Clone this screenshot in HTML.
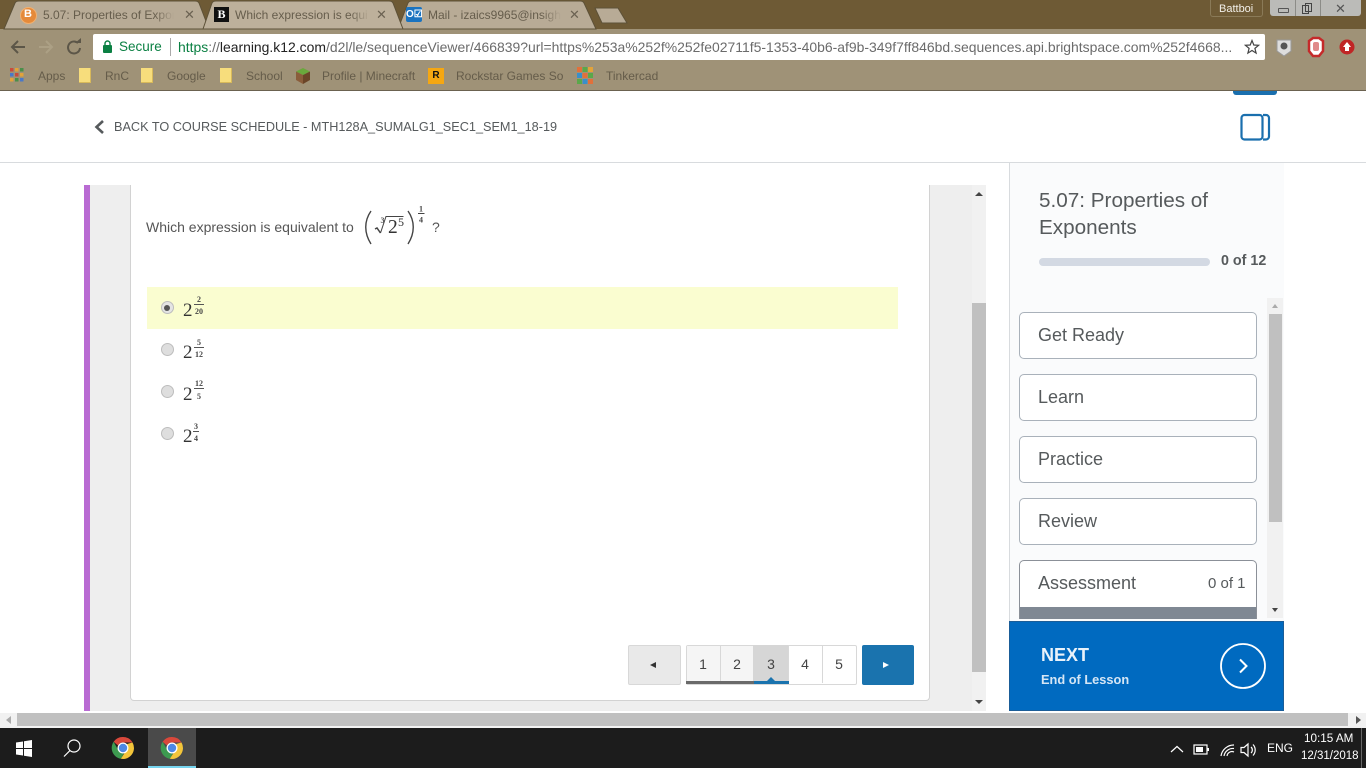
<!DOCTYPE html>
<html><head><meta charset="utf-8"><title>5.07: Properties of Exponents</title>
<style>
html,body{margin:0;padding:0;width:1366px;height:768px;overflow:hidden;background:#fff;font-family:"Liberation Sans",sans-serif}
.a{position:absolute}
.t{position:absolute;white-space:nowrap}
.tab{position:absolute;top:8px;font-size:12px;color:#665d4c;white-space:nowrap;overflow:hidden;line-height:15px;-webkit-mask-image:linear-gradient(90deg,#000 85%,transparent);mask-image:linear-gradient(90deg,#000 85%,transparent)}
.x{position:absolute;top:7px;font-size:13px;color:#6b6252;line-height:15px}
.bm{position:absolute;top:69px;font-size:12px;color:#655c4a;white-space:nowrap;line-height:14px}
.fold{position:absolute;top:68px;width:11px;height:14px;background:#f7dd7c;border-right:1px solid #d8b95a;border-bottom:1px solid #d8b95a}
.item{position:absolute;left:1019px;width:236px;height:45px;background:#fff;border:1px solid #a9b1ba;border-radius:5px}
.item span{position:absolute;left:18px;top:11px;font-size:18px;color:#565a5c;line-height:22px}
.pg{position:absolute;top:645px;height:38px;text-align:center;line-height:38px;font-size:14px;color:#444}
.radio{position:absolute;left:161px;width:11px;height:11px;border-radius:50%;border:1px solid #bdbdbd;background:#dedede}
.m{position:absolute;font-family:"Liberation Serif",serif;color:#333;line-height:1;font-size:19px}
.fn{position:absolute;font-family:"Liberation Serif",serif;font-weight:bold;font-size:8px;color:#444;text-align:center;line-height:8px;width:14px}
.bar{position:absolute;height:1px;background:#555}
</style></head><body>

<!-- chrome frame -->
<div class="a" style="left:0;top:0;width:1366px;height:29px;background:#6e5a35"></div>
<div class="a" style="left:0;top:29px;width:1366px;height:62px;background:#9f9277"></div>
<div class="a" style="left:0;top:90px;width:1366px;height:1px;background:#6b6250"></div>

<svg class="a" style="left:0;top:0" width="640" height="30">
<path d="M4 29 L15 3 Q16 1 19 1 H195 Q198 1 199 3 L209 29 Z" fill="#b8ab96" stroke="#5d5138"/>
<path d="M398 29 L408 3 Q409 1 412 1 H580 Q583 1 584 3 L596 29 Z" fill="#b8ab96" stroke="#5d5138"/>
<path d="M203 29 L212 3 Q213 1 216 1 H389 Q392 1 393 3 L403 29 Z" fill="#bdb09b" stroke="#5d5138"/>
<path d="M595 8 H618 L627 23 H602 Z" fill="#b8ab96" stroke="#5d5138"/>
</svg>
<div class="a" style="left:20px;top:7px;width:15px;height:15px;border-radius:50%;background:#e58a3a;border:1px solid #f0b070"></div>
<div class="t" style="left:24px;top:8px;font-size:11px;font-weight:bold;color:#fff;line-height:13px">B</div>
<div class="tab" style="left:43px;width:131px">5.07: Properties of Expon</div>
<div class="x" style="left:184px">✕</div>
<div class="a" style="left:214px;top:7px;width:15px;height:15px;background:#111;color:#fff;font:bold 12px/15px 'Liberation Serif',serif;text-align:center">B</div>
<div class="tab" style="left:235px;width:135px">Which expression is equi</div>
<div class="x" style="left:376px">✕</div>
<div class="a" style="left:406px;top:7px;width:16px;height:15px;background:#1a73c0;border-radius:2px;color:#fff;font:bold 10px/15px 'Liberation Sans',sans-serif;text-align:center;overflow:hidden">O☑</div>
<div class="tab" style="left:428px;width:133px">Mail - izaics9965@insight</div>
<div class="x" style="left:569px">✕</div>

<!-- window buttons -->
<div class="a" style="left:1210px;top:0;width:51px;height:16px;border:1px solid #8a7a58;border-top:0;border-radius:0 0 3px 3px;background:#6e5a35"></div>
<div class="t" style="left:1219px;top:2px;font-size:11px;color:#f2efe8;line-height:14px">Battboi</div>
<div class="a" style="left:1270px;top:0;width:91px;height:16px;background:#bbbbb8;border-radius:0 0 3px 3px"></div>
<div class="a" style="left:1278px;top:8px;width:9px;height:3px;border:1px solid #555;border-radius:1px"></div>
<div class="a" style="left:1295px;top:0;width:1px;height:16px;background:#8c8c88"></div>
<div class="a" style="left:1320px;top:0;width:1px;height:16px;background:#8c8c88"></div>
<div class="a" style="left:1302px;top:5px;width:5px;height:7px;border:1px solid #444;background:#bbbbb8"></div>
<div class="a" style="left:1305px;top:3px;width:5px;height:7px;border:1px solid #444"></div>
<div class="t" style="left:1335px;top:1px;font-size:13px;color:#555;line-height:15px">✕</div>

<!-- toolbar -->
<svg class="a" style="left:0;top:34px" width="92" height="26" fill="none" stroke-width="2">
<path d="M25 13 H12 M18 7 L12 13 L18 19" stroke="#5c5648"/>
<path d="M39 13 H52 M46 7 L52 13 L46 19" stroke="#aca085"/>
<path d="M78 9 A6 6 0 1 0 80 14" stroke="#5c5648"/>
<path d="M75 9 H81 V4 Z" fill="#5c5648" stroke="none"/>
</svg>
<div class="a" style="left:93px;top:34px;width:1172px;height:26px;background:#fff;border-radius:2px"></div>
<svg class="a" style="left:102px;top:40px" width="12" height="14"><rect x="1" y="5" width="9" height="8" rx="1" fill="#0b8043"/><path d="M3 5 V3.500 a2.500 2.500 0 0 1 5 0 V5" fill="none" stroke="#0b8043" stroke-width="1.400"/></svg>
<div class="t" style="left:119px;top:39px;font-size:13.500px;color:#0b8043;line-height:16px">Secure</div>
<div class="a" style="left:170px;top:38px;width:1px;height:18px;background:#aaa"></div>
<div class="t" style="left:178px;top:39px;width:1056px;overflow:hidden;font-size:13.950px;color:#6b6b6b;line-height:16px"><span style="color:#0b8043">https</span>://<span style="color:#222">learning.k12.com</span>/d2l/le/sequenceViewer/466839?url=https%253a%252f%252fe02711f5-1353-40b6-af9b-349f7ff846bd.sequences.api.brightspace.com%252f4668...</div>
<svg class="a" style="left:1244px;top:39px" width="16" height="16"><path d="M8 1.500 L9.800 6 L14.600 6.300 L10.900 9.400 L12.100 14.100 L8 11.500 L3.900 14.100 L5.100 9.400 L1.400 6.300 L6.200 6 Z" fill="none" stroke="#444" stroke-width="1.200"/></svg>
<svg class="a" style="left:1272px;top:36px" width="90" height="22">
<path d="M5 4 H19 V15 L12 20 L5 15 Z" fill="#ddd" stroke="#999"/><circle cx="12" cy="10" r="3.500" fill="#555"/>
<path d="M37 5 L41 2 H47 L51 5 V15 L47 20 H41 L37 15 Z" fill="#fff" stroke="#c52a2a" stroke-width="2.500"/><rect x="41" y="6" width="6" height="9" rx="2" fill="#e08a8a"/>
<circle cx="75" cy="11" r="7.500" fill="#c02525"/><path d="M75 6 L79 11 H77 V15 H73 V11 H71 Z" fill="#fff"/>
</svg>

<!-- bookmarks -->
<svg class="a" style="left:10px;top:68px" width="14" height="14">
<g fill="#c94c3c"><rect x="0" y="0" width="3.500" height="3.500"/><rect x="5" y="0" width="3.500" height="3.500" fill="#e2a33a"/><rect x="10" y="0" width="3.500" height="3.500" fill="#4a8f4a"/><rect x="0" y="5" width="3.500" height="3.500" fill="#4a78c9"/><rect x="5" y="5" width="3.500" height="3.500"/><rect x="10" y="5" width="3.500" height="3.500" fill="#e2a33a"/><rect x="0" y="10" width="3.500" height="3.500" fill="#e2a33a"/><rect x="5" y="10" width="3.500" height="3.500" fill="#4a8f4a"/><rect x="10" y="10" width="3.500" height="3.500" fill="#4a78c9"/></g></svg>
<div class="bm" style="left:38px">Apps</div>
<div class="fold" style="left:79px"></div><div class="bm" style="left:105px">RnC</div>
<div class="fold" style="left:141px"></div><div class="bm" style="left:167px">Google</div>
<div class="fold" style="left:220px"></div><div class="bm" style="left:246px">School</div>
<svg class="a" style="left:295px;top:68px" width="16" height="16"><path d="M8 0 L15 3.500 L8 7 L1 3.500 Z" fill="#6aa83c"/><path d="M1 3.500 L8 7 V16 L1 12 Z" fill="#8a5d3b"/><path d="M15 3.500 L8 7 V16 L15 12 Z" fill="#6b4528"/></svg>
<div class="bm" style="left:322px">Profile | Minecraft</div>
<div class="a" style="left:428px;top:68px;width:16px;height:16px;background:#f5a712;color:#111;font:bold 10px/15px 'Liberation Sans',sans-serif;text-align:center">R</div>
<div class="bm" style="left:456px;width:107px;overflow:hidden">Rockstar Games Soc</div>
<svg class="a" style="left:577px;top:67px" width="16" height="17"><g><rect width="5" height="5" fill="#e2703a"/><rect x="5.500" width="5" height="5" fill="#5aa84a"/><rect x="11" width="5" height="5" fill="#e2a33a"/><rect y="6" width="5" height="5" fill="#3a8fc9"/><rect x="5.500" y="6" width="5" height="5" fill="#e2703a"/><rect x="11" y="6" width="5" height="5" fill="#5aa84a"/><rect y="12" width="5" height="5" fill="#5aa84a"/><rect x="5.500" y="12" width="5" height="5" fill="#3a8fc9"/><rect x="11" y="12" width="5" height="5" fill="#e2703a"/></g></svg>
<div class="bm" style="left:606px">Tinkercad</div>

<!-- page header -->
<div class="a" style="left:1233px;top:91px;width:44px;height:4px;background:#1a6fae;border-radius:0 0 3px 3px"></div>
<svg class="a" style="left:93px;top:119px" width="12" height="16"><path d="M10 2 L3.500 8 L10 14" fill="none" stroke="#565a5c" stroke-width="2.600"/></svg>
<div class="t" style="left:114px;top:119px;font-size:12.700px;color:#565a5c;line-height:16px">BACK TO COURSE SCHEDULE - MTH128A_SUMALG1_SEC1_SEM1_18-19</div>
<svg class="a" style="left:1240px;top:113px" width="32" height="28" fill="none" stroke="#1a6fae" stroke-width="2.200"><rect x="1.500" y="2" width="21" height="24.500" rx="3"/><path d="M23 2 H26 a3 3 0 0 1 3 3 V23.500 a3 3 0 0 1 -3 3 H23"/></svg>
<div class="a" style="left:0;top:162px;width:1366px;height:1px;background:#d8dbde"></div>

<!-- content -->
<div class="a" style="left:84px;top:185px;width:6px;height:526px;background:#b96bd3"></div>
<div class="a" style="left:90px;top:185px;width:896px;height:526px;background:#eeeeee"></div>
<div class="a" style="left:130px;top:185px;width:798px;height:515px;background:#fff;border:1px solid #d2d2d2;border-top:0;border-radius:0 0 4px 4px"></div>

<div class="t" style="left:146px;top:219px;font-size:14px;color:#555;line-height:16px">Which expression is equivalent to</div>
<svg class="a" style="left:362px;top:203px" width="70" height="44">
<path d="M9 8 C2 18 2 30 9 41" fill="none" stroke="#444" stroke-width="1.400"/>
<path d="M46 8 C53 18 53 30 46 41" fill="none" stroke="#444" stroke-width="1.400"/>
<path d="M13 26 L15 25 L18.500 30" fill="none" stroke="#444" stroke-width="1.500"/>
<path d="M18.500 30 L24 13.500 H41.500" fill="none" stroke="#444" stroke-width="1"/>
<text x="18.500" y="20" font-family="Liberation Serif" font-size="8" font-weight="bold" fill="#555">3</text>
<text x="26" y="30" font-family="Liberation Serif" font-size="19.500" fill="#333">2</text>
<text x="36" y="23" font-family="Liberation Serif" font-size="12" fill="#333">5</text>
<text x="57" y="8.500" font-family="Liberation Serif" font-size="8" font-weight="bold" fill="#444">1</text>
<path d="M56 10.500 H62.500" stroke="#444" stroke-width="1"/>
<text x="57" y="19.500" font-family="Liberation Serif" font-size="8" font-weight="bold" fill="#444">4</text>
</svg>
<div class="t" style="left:432px;top:219px;font-size:14px;color:#555;line-height:16px">?</div>

<div class="a" style="left:147px;top:287px;width:751px;height:42px;background:#fafdd0"></div>

<div class="radio" style="top:301px;background:#e4e4e4"></div>
<div class="a" style="left:164px;top:305px;width:6px;height:6px;border-radius:50%;background:#555"></div>
<div class="radio" style="top:343px"></div>
<div class="radio" style="top:385px"></div>
<div class="radio" style="top:427px"></div>

<div class="m" style="left:183px;top:301px">2</div>
<div class="fn" style="left:192px;top:296px">2</div><div class="bar" style="left:194px;top:304px;width:10px"></div><div class="fn" style="left:192px;top:308px">20</div>
<div class="m" style="left:183px;top:343px">2</div>
<div class="fn" style="left:192px;top:339px">5</div><div class="bar" style="left:194px;top:347px;width:10px"></div><div class="fn" style="left:192px;top:351px">12</div>
<div class="m" style="left:183px;top:385px">2</div>
<div class="fn" style="left:192px;top:380px">12</div><div class="bar" style="left:194px;top:388px;width:10px"></div><div class="fn" style="left:192px;top:393px">5</div>
<div class="m" style="left:183px;top:427px">2</div>
<div class="fn" style="left:189px;top:423px">3</div><div class="bar" style="left:193px;top:431px;width:6px"></div><div class="fn" style="left:189px;top:435px">4</div>

<!-- pager -->
<div class="a" style="left:628px;top:645px;width:51px;height:38px;background:#e9e9e9;border:1px solid #d8d8d8;border-radius:2px"></div>
<div class="a" style="left:650px;top:662px;width:0;height:0;border-right:6px solid #333;border-top:3px solid transparent;border-bottom:3px solid transparent"></div>
<div class="a" style="left:686px;top:645px;width:169px;height:38px;border:1px solid #d8d8d8;border-radius:2px;background:#fff"></div>
<div class="a" style="left:687px;top:646px;width:66px;height:37px;background:#f5f5f5"></div>
<div class="a" style="left:753px;top:645px;width:36px;height:39px;background:#d6d6d6"></div>
<div class="a" style="left:720px;top:645px;width:1px;height:38px;background:#d8d8d8"></div>
<div class="a" style="left:822px;top:645px;width:1px;height:38px;background:#d8d8d8"></div>
<div class="a" style="left:788px;top:645px;width:1px;height:38px;background:#d8d8d8"></div>
<div class="pg" style="left:686px;width:34px">1</div>
<div class="pg" style="left:720px;width:34px">2</div>
<div class="pg" style="left:754px;width:34px">3</div>
<div class="pg" style="left:788px;width:34px">4</div>
<div class="pg" style="left:822px;width:34px">5</div>
<div class="a" style="left:686px;top:681px;width:68px;height:3px;background:#6a6a6a"></div>
<div class="a" style="left:754px;top:681px;width:35px;height:3px;background:#1a73ae"></div>
<div class="a" style="left:767px;top:677px;width:0;height:0;border-left:4px solid transparent;border-right:4px solid transparent;border-bottom:4px solid #1a73ae"></div>
<div class="a" style="left:862px;top:645px;width:52px;height:40px;background:#1a73ae;border-radius:2px"></div>
<div class="a" style="left:883px;top:662px;width:0;height:0;border-left:6px solid #fff;border-top:3px solid transparent;border-bottom:3px solid transparent"></div>

<!-- content scrollbar -->
<div class="a" style="left:972px;top:185px;width:14px;height:526px;background:#f1f1f1"></div>
<div class="a" style="left:972px;top:303px;width:14px;height:369px;background:#c0c0c0"></div>
<div class="a" style="left:975px;top:192px;width:0;height:0;border-left:4px solid transparent;border-right:4px solid transparent;border-bottom:4px solid #444"></div>
<div class="a" style="left:975px;top:700px;width:0;height:0;border-left:4px solid transparent;border-right:4px solid transparent;border-top:4px solid #444"></div>

<!-- sidebar -->
<div class="a" style="left:1009px;top:163px;width:275px;height:458px;background:#fafbfc;border-left:1px solid #d8dbde;box-sizing:border-box"></div>
<div class="a" style="left:1039px;top:187px;font-size:20.700px;line-height:27px;color:#565a5c;width:200px">5.07: Properties of Exponents</div>
<div class="a" style="left:1039px;top:258px;width:171px;height:8px;background:#d3d9e3;border-radius:4px"></div>
<div class="t" style="left:1221px;top:253px;font-size:14.300px;font-weight:bold;color:#565a5c;line-height:16px">0 of 12</div>

<div class="item" style="top:312px"><span>Get Ready</span></div>
<div class="item" style="top:374px"><span>Learn</span></div>
<div class="item" style="top:436px"><span>Practice</span></div>
<div class="item" style="top:498px"><span>Review</span></div>
<div class="item" style="top:560px;height:58px;overflow:hidden;border-color:#8b9098;border-bottom:0;border-radius:5px 5px 0 0"><span>Assessment</span><div class="t" style="left:188px;top:15px;font-size:15px;color:#565a5c;line-height:16px">0 of 1</div><div class="a" style="left:0;top:46px;width:236px;height:12px;background:#7f8893"></div></div>

<div class="a" style="left:1267px;top:298px;width:16px;height:320px;background:#f1f1f1"></div>
<div class="a" style="left:1269px;top:314px;width:13px;height:208px;background:#c0c0c0"></div>
<div class="a" style="left:1272px;top:304px;width:0;height:0;border-left:3.500px solid transparent;border-right:3.500px solid transparent;border-bottom:4px solid #aaa"></div>
<div class="a" style="left:1272px;top:608px;width:0;height:0;border-left:3.500px solid transparent;border-right:3.500px solid transparent;border-top:4px solid #444"></div>

<!-- next -->
<div class="a" style="left:1009px;top:621px;width:275px;height:90px;background:#006ac0;border:1px solid #1a5d98;box-sizing:border-box"></div>
<div class="t" style="left:1041px;top:645px;font-size:18px;font-weight:bold;color:#e9f2fa;line-height:21px">NEXT</div>
<div class="t" style="left:1041px;top:672px;font-size:12.800px;font-weight:bold;color:#d5e6f5;line-height:16px">End of Lesson</div>
<svg class="a" style="left:1218px;top:641px" width="50" height="50" fill="none" stroke="#fff" stroke-width="1.800"><circle cx="25" cy="25" r="22"/><path d="M22 18.500 L28.500 25 L22 31.500" stroke-width="2"/></svg>

<!-- bottom scrollbar -->
<div class="a" style="left:0;top:713px;width:1366px;height:15px;background:#f1f1f1"></div>
<div class="a" style="left:17px;top:713px;width:1331px;height:13px;background:#c0c0c0"></div>
<div class="a" style="left:6px;top:716px;width:0;height:0;border-right:5px solid #aaa;border-top:4px solid transparent;border-bottom:4px solid transparent"></div>
<div class="a" style="left:1356px;top:716px;width:0;height:0;border-left:5px solid #555;border-top:4px solid transparent;border-bottom:4px solid transparent"></div>

<!-- taskbar -->
<div class="a" style="left:0;top:728px;width:1366px;height:40px;background:#1c1c1c"></div>
<svg class="a" style="left:16px;top:740px" width="17" height="17" fill="#fff"><path d="M0 2.500 L7 1.500 V8 H0 Z M8 1.300 L16 0 V8 H8 Z M0 9 H7 V15.500 L0 14.500 Z M8 9 H16 V17 L8 15.700 Z"/></svg>
<svg class="a" style="left:62px;top:738px" width="20" height="20" fill="none" stroke="#fff" stroke-width="1.200"><circle cx="12" cy="8" r="6"/><path d="M8 12.500 L2 18.500"/></svg>
<div class="a" style="left:148px;top:728px;width:48px;height:40px;background:#4a4a4a"></div>
<div class="a" style="left:148px;top:766px;width:48px;height:2px;background:#76d5ef"></div>
<svg class="a" style="left:111px;top:736px" width="24" height="24" viewBox="0 0 24 24"><path d="M12 1 A11 11 0 0 1 21.500 6.500 H12 A5.500 5.500 0 0 0 7 9.500 L2.600 5.800 A11 11 0 0 1 12 1Z" fill="#d9483b"/><path d="M2.600 5.800 L7.500 14.500 A5.500 5.500 0 0 0 12.800 17.500 L9.800 22.800 A11 11 0 0 1 2.600 5.800Z" fill="#3d9a50"/><path d="M21.500 6.500 A11 11 0 0 1 9.800 22.800 L15.500 14 A5.500 5.500 0 0 0 16 8 Z" fill="#f3c53a"/><circle cx="12" cy="12" r="5.500" fill="#fff"/><circle cx="12" cy="12" r="4.200" fill="#4e88e5"/></svg>
<svg class="a" style="left:160px;top:736px" width="24" height="24" viewBox="0 0 24 24"><path d="M12 1 A11 11 0 0 1 21.500 6.500 H12 A5.500 5.500 0 0 0 7 9.500 L2.600 5.800 A11 11 0 0 1 12 1Z" fill="#d9483b"/><path d="M2.600 5.800 L7.500 14.500 A5.500 5.500 0 0 0 12.800 17.500 L9.800 22.800 A11 11 0 0 1 2.600 5.800Z" fill="#3d9a50"/><path d="M21.500 6.500 A11 11 0 0 1 9.800 22.800 L15.500 14 A5.500 5.500 0 0 0 16 8 Z" fill="#f3c53a"/><circle cx="12" cy="12" r="5.500" fill="#fff"/><circle cx="12" cy="12" r="4.200" fill="#4e88e5"/></svg>

<svg class="a" style="left:1168px;top:738px" width="90" height="22" fill="none" stroke="#fff" stroke-width="1.200">
<path d="M3 14 L9 8.500 L15 14"/>
<rect x="26" y="7" width="13" height="9"/><rect x="28" y="9" width="7" height="5" fill="#fff" stroke="none"/><rect x="39.500" y="10" width="1.500" height="3" fill="#fff" stroke="none"/>
<path d="M53 18 A13 13 0 0 1 66 7 M56 18 A9 9 0 0 1 66 10.500 M59 18 A5 5 0 0 1 66 14"/>
<path d="M73 9.500 H76 L80 6 V18 L76 14.500 H73 Z"/><path d="M83 9 A4 4 0 0 1 83 15 M85 6.500 A8 8 0 0 1 85 17.500"/>
</svg>
<div class="t" style="left:1267px;top:741px;font-size:12px;color:#fff;line-height:14px">ENG</div>
<div class="t" style="left:1304px;top:731px;font-size:11.700px;color:#fff;line-height:15px">10:15 AM</div>
<div class="t" style="left:1301px;top:749px;font-size:11.500px;color:#fff;line-height:15px">12/31/2018</div>
<div class="a" style="left:1361px;top:728px;width:1px;height:40px;background:#666"></div>
</body></html>
